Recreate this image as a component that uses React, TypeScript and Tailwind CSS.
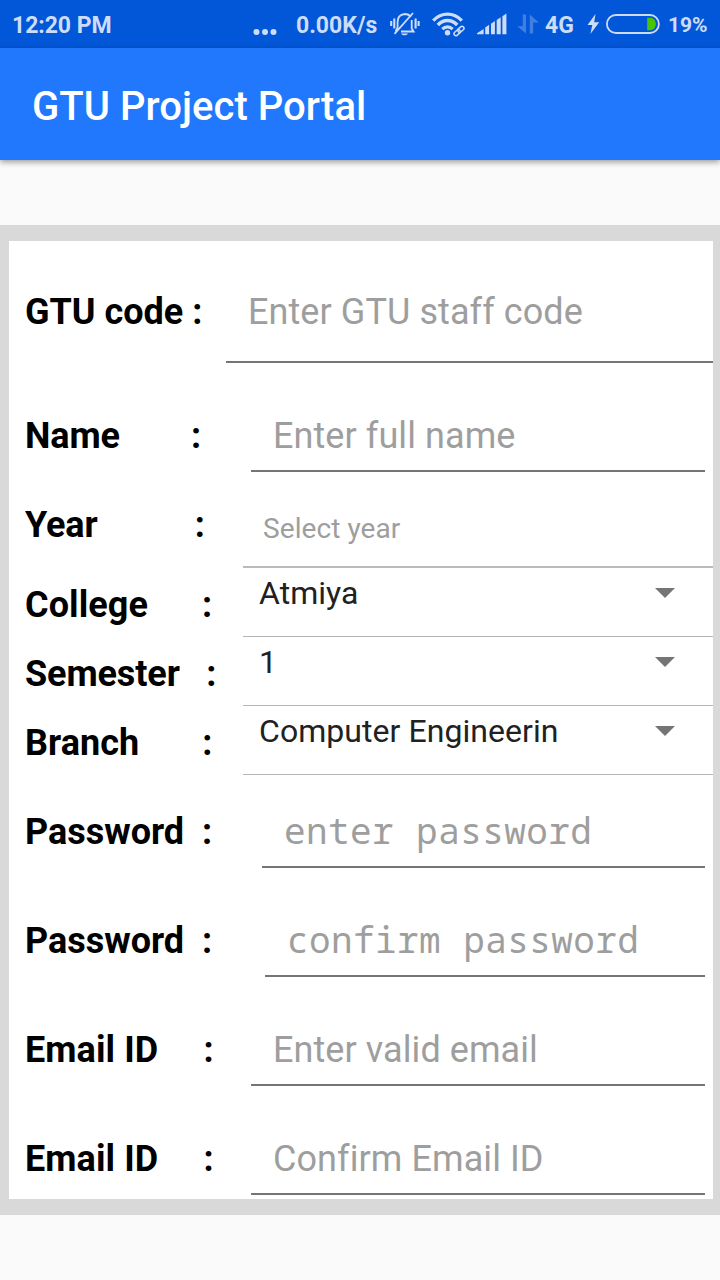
import React from "react";

type Row = {
  label: string;
  value: string;
  kind: "input" | "mono" | "year" | "select";
  row: string;
  labelPad: string;
  field: string;
};

const rows: Row[] = [
  { label: "GTU code :", value: "Enter GTU staff code", kind: "input", row: "h-[122px]", labelPad: "pt-[50px]", field: "w-[487px] pt-[50px]" },
  { label: "Name        :", value: "Enter full name", kind: "input", row: "h-[109px] pr-2", labelPad: "pt-[52px] tracking-[-0.08px]", field: "w-[454px] pt-[52px]" },
  { label: "Year           :", value: "Select year", kind: "year", row: "h-24", labelPad: "pt-8 tracking-[-0.12px]", field: "w-[470px] pt-10" },
  { label: "College      :", value: "Atmiya", kind: "select", row: "h-[69px]", labelPad: "pt-4 tracking-[0.08px]", field: "w-[470px] pt-1.5" },
  { label: "Semester   :", value: "1", kind: "select", row: "h-[69px]", labelPad: "pt-4 tracking-[-0.1px]", field: "w-[470px] pt-1.5" },
  { label: "Branch       :", value: "Computer Engineerin", kind: "select", row: "h-[69px]", labelPad: "pt-4 tracking-[0.05px]", field: "w-[470px] pt-1.5" },
  { label: "Password  :", value: "enter password", kind: "mono", row: "h-[93px] pr-2", labelPad: "pt-9", field: "w-[443px] pt-[35px]" },
  { label: "Password  :", value: "confirm password", kind: "mono", row: "h-[109px] pr-2", labelPad: "pt-[52px]", field: "w-[440px] pt-[51px]" },
  { label: "Email ID     :", value: "Enter valid email", kind: "input", row: "h-[109px] pr-2", labelPad: "pt-[52px] tracking-[0.08px]", field: "w-[454px] pt-[52px]" },
  { label: "Email ID     :", value: "Confirm Email ID", kind: "input", row: "h-[109px] pr-2", labelPad: "pt-[52px] tracking-[0.08px]", field: "w-[454px] pt-[52px]" },
];

const kindClass = {
  input: "border-b-2 border-[#757575] pl-[22px] text-[36px] leading-[42px] tracking-[0.08px] [font-variant-ligatures:common-ligatures] text-[#9e9e9e]",
  mono: "border-b-2 border-[#757575] pl-[22px] font-['Noto_Sans_Mono','DejaVu_Sans_Mono',monospace] text-[36px] leading-[42px] tracking-[0.42px] text-[#9e9e9e]",
  year: "border-b-2 border-[#bababa] pl-5 text-[28px] leading-[33px] tracking-[0.08px] text-[#9e9e9e]",
  select: "border-b border-[#b5b5b5] pl-4 pr-[38px] text-[32px] leading-[38px] tracking-[0.05px] text-[#212121]",
};

function StatusBar() {
  return (
    <div className="flex h-12 shrink-0 items-center bg-[#0257d9] pl-3 text-[23px] leading-none font-bold text-[#cdddf7]">
      <span className="w-[241px] whitespace-nowrap pt-[3px] tracking-[-0.05px]">12:20 PM</span>
      <svg className="mt-[15px] mr-[19px] shrink-0" width="24" height="8" viewBox="0 0 24 8" fill="currentColor">
        <circle cx="3.5" cy="4" r="3" />
        <circle cx="12" cy="4" r="3" />
        <circle cx="20.5" cy="4" r="3" />
      </svg>
      <span className="w-[94px] whitespace-nowrap pt-[3px]">0.00K/s</span>
      <svg className="shrink-0" width="30" height="26" viewBox="0 0 30 26" fill="none" stroke="currentColor" strokeWidth="1.8">
        <path d="M7.6 17.5V11c0-4.500 2.500-7.500 7-8 2.800 0 5 1 6.100 3M21.700 9v8.500l1.900 3H11M7.600 16.500l-2 4" />
        <path d="M23 2 4.500 22.800" />
        <path d="M11 22.500h7c-.8 2.400-6.200 2.400-7 0Z" fill="currentColor" stroke="none" />
        <path d="M4.300 7.500v10M1.200 10v5M25.600 7.500v10M28.600 10v5" strokeWidth="2.100" />
      </svg>
      <svg className="ml-3 shrink-0" width="34" height="26" viewBox="0 0 34 26" fill="none" stroke="currentColor">
        <path d="M1.200 9.600C9.500 1 21.500 1 29.800 9.600" strokeWidth="3.400" />
        <path d="M5.800 14C11.500 8 19.500 8 25.200 14" strokeWidth="3.400" />
        <path d="M10.300 18.200C13.500 15 17.500 15 20.700 18.200" strokeWidth="3.200" />
        <circle cx="15.500" cy="21.700" r="2.700" fill="currentColor" stroke="none" />
        <g transform="rotate(-42 27 20)" stroke="#0257d9" strokeWidth="4.500">
          <rect x="21" y="18" width="7" height="4" rx="2" />
          <rect x="26" y="18" width="7" height="4" rx="2" />
        </g>
        <g transform="rotate(-42 27 20)" strokeWidth="1.500">
          <rect x="21" y="18" width="7" height="4" rx="2" />
          <rect x="26" y="18" width="7" height="4" rx="2" />
        </g>
      </svg>
      <svg className="ml-[11px] shrink-0" width="30" height="22" viewBox="0 0 30 22" fill="currentColor">
        <path d="M0 21.300v-1L6.600 16v5.300ZM8.200 21.300v-6.800l3.900-2.700v9.500ZM14 21.300V10.800l3.900-2.700v13.200ZM19.700 21.300V6.900l4-2.700v17.100ZM25.400 21.300V3.200l4-2.700v20.800Z" />
      </svg>
      <svg className="ml-2.5 shrink-0 opacity-30" width="22" height="20" viewBox="0 0 22 20" fill="currentColor">
        <path d="M9 .5v19L.3 12.300h5.500V.5ZM12.800 19.500V.5l8.900 8h-5.500v11Z" />
      </svg>
      <span className="ml-[6px] w-[42px] pt-[3px]">4G</span>
      <svg className="shrink-0" width="13" height="20" viewBox="0 0 13 20" fill="currentColor">
        <path d="M8.500 0 .5 11h4.800L3.400 20 12.200 8.300H7.200Z" />
      </svg>
      <svg className="ml-[5px] shrink-0" width="56" height="20" viewBox="0 0 56 20">
        <rect x="1.900" y="1" width="52" height="18" rx="9" fill="none" stroke="currentColor" strokeWidth="1.800" />
        <path d="M42.200 3.800h3.200c7.200 0 7.200 12.400 0 12.400h-3.200Z" fill="#4bc400" />
      </svg>
      <span className="ml-[7px] pt-0.5 text-[21px]">19%</span>
    </div>
  );
}

export default function App() {
  return (
    <div className="flex h-[1280px] w-[720px] flex-col overflow-hidden bg-[#fafafa] font-['Roboto',sans-serif]">
      <StatusBar />
      <header className="flex h-28 shrink-0 items-center bg-[#2178fc] pl-8 pt-1.5 text-[40px] font-medium tracking-[0.05px] text-white shadow-[0_2px_6px_rgba(0,0,0,0.4)]">
        GTU Project Portal
      </header>
      <main className="mt-[65px] h-[990px] border-y-16 border-r-7 border-l-9 border-[#d9d9d9] bg-white">
        {rows.map((r, i) => (
          <div key={i} className={`flex justify-between pl-4 ${r.row}`}>
            <div className={`shrink-0 text-[36px] leading-[42px] font-bold whitespace-pre text-black ${r.labelPad}`}>{r.label}</div>
            <div className={`flex shrink-0 items-start justify-between whitespace-nowrap ${kindClass[r.kind]} ${r.field}`}>
              <span>{r.value}</span>
              {r.kind === "select" && (
                <svg className="mt-[14px]" width="20" height="10" viewBox="0 0 20 10" fill="#757575">
                  <path d="M0 0h20L10 10Z" />
                </svg>
              )}
            </div>
          </div>
        ))}
      </main>
    </div>
  );
}
